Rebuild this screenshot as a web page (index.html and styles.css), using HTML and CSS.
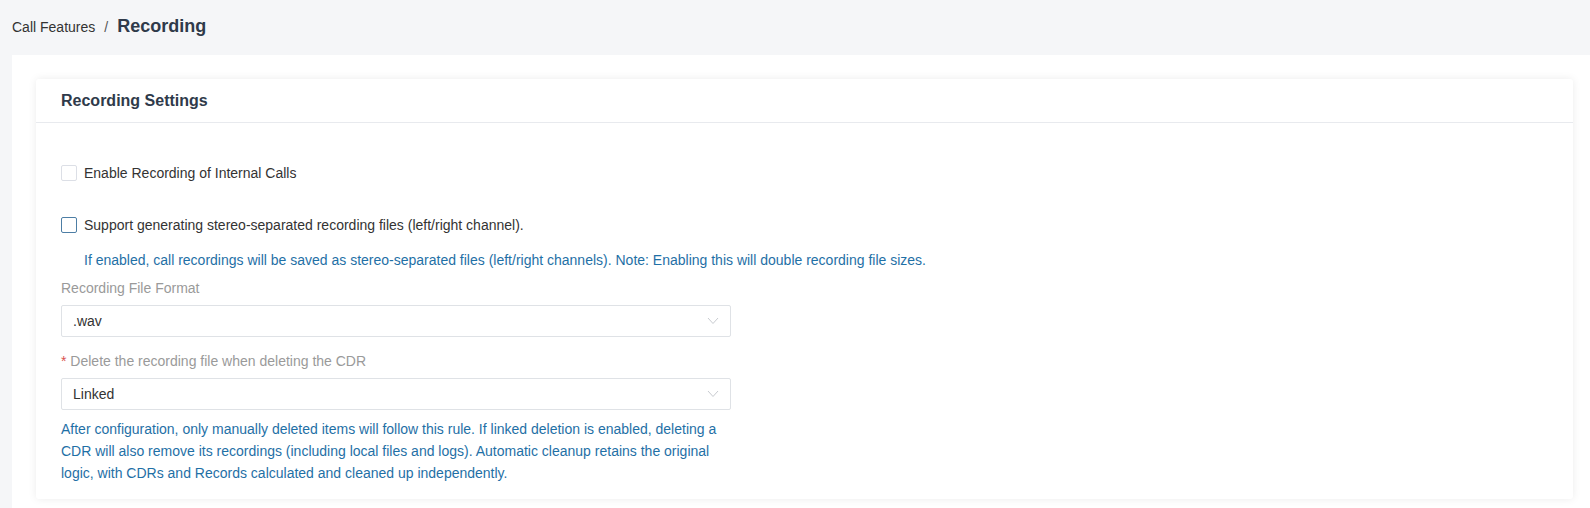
FILE: index.html
```html
<!DOCTYPE html>
<html>
<head>
<meta charset="utf-8">
<link rel="stylesheet" href="styles.css">
</head>
<body>
<div class="topbar">
  <span class="crumb">Call Features</span>
  <span class="sep">/</span>
  <span class="crumb-current">Recording</span>
</div>
<div class="main">
  <div class="card">
    <div class="card-header">Recording Settings</div>
    <div class="card-body">
      <label class="check-row row-first">
        <span class="box"></span>
        <span class="check-label">Enable Recording of Internal Calls</span>
      </label>
      <label class="check-row row-second">
        <span class="box box-active"></span>
        <span class="check-label">Support generating stereo-separated recording files (left/right channel).</span>
      </label>
      <div class="hint hint-indent">If enabled, call recordings will be saved as stereo-separated files (left/right channels). Note: Enabling this will double recording file sizes.</div>
      <div class="field-label label-first">Recording File Format</div>
      <div class="select">
        <span class="select-value">.wav</span>
        <svg class="chevron" width="12" height="8" viewBox="0 0 12 8"><path d="M1 1 L6 6.5 L11 1" fill="none" stroke="#c8cbd0" stroke-width="1"/></svg>
      </div>
      <div class="field-label label-second"><span class="req">*</span> Delete the recording file when deleting the CDR</div>
      <div class="select">
        <span class="select-value">Linked</span>
        <svg class="chevron" width="12" height="8" viewBox="0 0 12 8"><path d="M1 1 L6 6.5 L11 1" fill="none" stroke="#c8cbd0" stroke-width="1"/></svg>
      </div>
      <div class="hint desc">After configuration, only manually deleted items will follow this rule. If linked deletion is enabled, deleting a CDR will also remove its recordings (including local files and logs). Automatic cleanup retains the original logic, with CDRs and Records calculated and cleaned up independently.</div>
    </div>
  </div>
</div>
</body>
</html>
```
FILE: styles.css
```css
* { box-sizing: border-box; }
html, body { height: 100%; }
body {
  margin: 0;
  background: #f5f6f8;
  font-family: "Liberation Sans", Arial, sans-serif;
  color: #333;
  display: flex;
  flex-direction: column;
  overflow: hidden;
}
.topbar {
  height: 50px;
  flex: none;
  display: flex;
  align-items: center;
  padding-left: 12px;
  padding-top: 3px;
}
.crumb { font-size: 14px; color: #333; }
.sep { font-size: 14px; color: #555; margin: 0 9px 0 9px; }
.crumb-current { font-size: 18px; font-weight: bold; color: #2f3a4a; }
.main {
  flex: 1;
  margin-top: 5px;
  margin-left: 12px;
  background: #fff;
  padding: 24px 17px 0 24px;
}
.card {
  background: #fff;
  border-radius: 3px;
  box-shadow: 0 0 8px rgba(0, 0, 0, 0.08);
}
.card-header {
  height: 44px;
  border-bottom: 1px solid #e8eaee;
  padding-left: 25px;
  display: flex;
  align-items: center;
  font-size: 16px;
  font-weight: bold;
  color: #2f3a4a;
}
.card-body {
  padding: 40px 25px 15px 25px;
}
.check-row {
  display: flex;
  align-items: center;
  height: 20px;
  font-size: 14px;
  color: #333;
}
.row-second { margin-top: 32px; }
.box {
  width: 16px;
  height: 16px;
  border: 1px solid #dcdfe6;
  border-radius: 2px;
  margin-right: 7px;
  background: #fff;
}
.box-active { border-color: #4d7ea5; }
.hint {
  font-size: 14px;
  color: #1f70a6;
  line-height: 20px;
}
.hint-indent { margin-top: 15px; padding-left: 23px; }
.field-label {
  font-size: 14px;
  color: #9a9a9a;
  line-height: 20px;
}
.label-first { margin-top: 8px; }
.label-second { margin-top: 14px; }
.req { color: #d9534f; }
.select {
  margin-top: 7px;
  width: 670px;
  height: 32px;
  border: 1px solid #dfe2e6;
  border-radius: 2px;
  display: flex;
  align-items: center;
  justify-content: space-between;
  padding: 0 11px 0 11px;
  font-size: 14px;
  color: #333;
}
.chevron { display: block; }
.desc {
  margin-top: 8px;
  width: 670px;
  line-height: 22px;
}
```
